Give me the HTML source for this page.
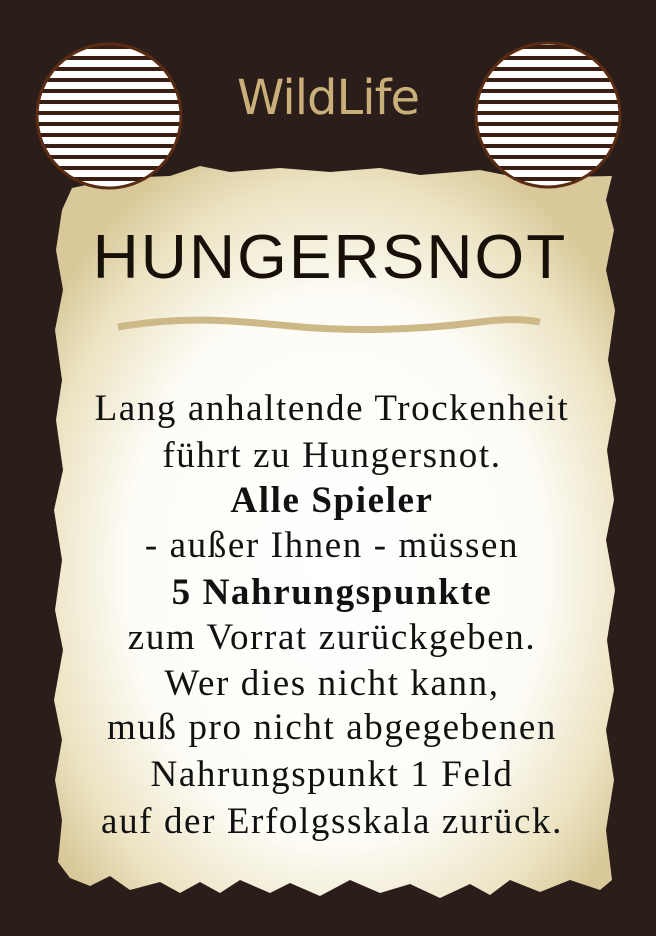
<!DOCTYPE html>
<html><head><meta charset="utf-8"><style>
html,body{margin:0;padding:0}
body{width:656px;height:936px;position:relative;overflow:hidden;background:#2b1d19}
svg{position:absolute;left:0;top:0}
.t{position:absolute;left:0;width:656px;text-align:center;color:#111}
#wl{top:70px;left:0;width:656px;font-family:"DejaVu Sans","Liberation Sans",sans-serif;font-size:48px;color:#c9b07a;letter-spacing:-1px}
#hs{top:222px;font-family:"Liberation Sans",sans-serif;font-size:62px;letter-spacing:2px;color:#161008;transform:scaleX(1.03);left:2px}
.b{position:absolute;left:4px;width:656px;text-align:center;font-family:"Liberation Serif",serif;font-size:37px;letter-spacing:1.6px;color:#111;line-height:46px}
</style></head><body>
<svg width="656" height="936" viewBox="0 0 656 936">
<defs>
<radialGradient id="pg" cx="0.5" cy="0.55" r="0.62">
<stop offset="0" stop-color="#ffffff"/><stop offset="0.6" stop-color="#fdfcf6"/><stop offset="0.85" stop-color="#ece3c2"/><stop offset="1" stop-color="#d9c99a"/>
</radialGradient>
<pattern id="st" width="10" height="11" patternUnits="userSpaceOnUse" y="45">
<rect width="10" height="11" fill="#3a1e12"/><rect y="4" width="10" height="7" fill="#fff"/>
</pattern>
</defs>
<polygon fill="url(#pg)" points="72,188 120,178 170,176 200,166 230,172 280,168 330,172 380,168 420,175 480,170 520,178 612,176 606,200 614,230 606,270 615,310 608,360 616,400 607,450 614,500 606,540 615,590 607,640 614,690 606,730 614,780 606,830 612,880 600,890 570,880 540,892 510,880 490,895 470,884 440,898 410,884 380,893 350,880 320,896 290,883 270,893 240,880 220,893 200,882 180,893 160,882 130,890 110,876 90,886 70,878 58,862 62,820 55,780 62,740 54,700 63,650 55,610 62,560 54,510 63,470 56,420 62,380 55,330 63,290 56,250 62,210"/>
<circle cx="109" cy="116" r="72" fill="url(#st)" stroke="#5a2c14" stroke-width="3"/>
<circle cx="548" cy="115" r="72" fill="url(#st)" stroke="#5a2c14" stroke-width="3"/>
<path d="M118,327 C180,316 230,320 290,326 C350,332 420,330 480,322 C510,318 530,320 540,322" stroke="#cdb988" stroke-width="7" fill="none"/>
</svg>
<div class="t" id="wl">WildLife</div>
<div class="t" id="hs">HUNGERSNOT</div>
<div class="b" style="top:386px">Lang anhaltende Trockenheit</div>
<div class="b" style="top:433px">führt zu Hungersnot.</div>
<div class="b" style="top:478px;font-weight:bold">Alle Spieler</div>
<div class="b" style="top:523px">- außer Ihnen - müssen</div>
<div class="b" style="top:570px;font-weight:bold">5 Nahrungspunkte</div>
<div class="b" style="top:615px">zum Vorrat zurückgeben.</div>
<div class="b" style="top:661px">Wer dies nicht kann,</div>
<div class="b" style="top:705px">muß pro nicht abgegebenen</div>
<div class="b" style="top:752px">Nahrungspunkt 1 Feld</div>
<div class="b" style="top:799px">auf der Erfolgsskala zurück.</div>
</body></html>
